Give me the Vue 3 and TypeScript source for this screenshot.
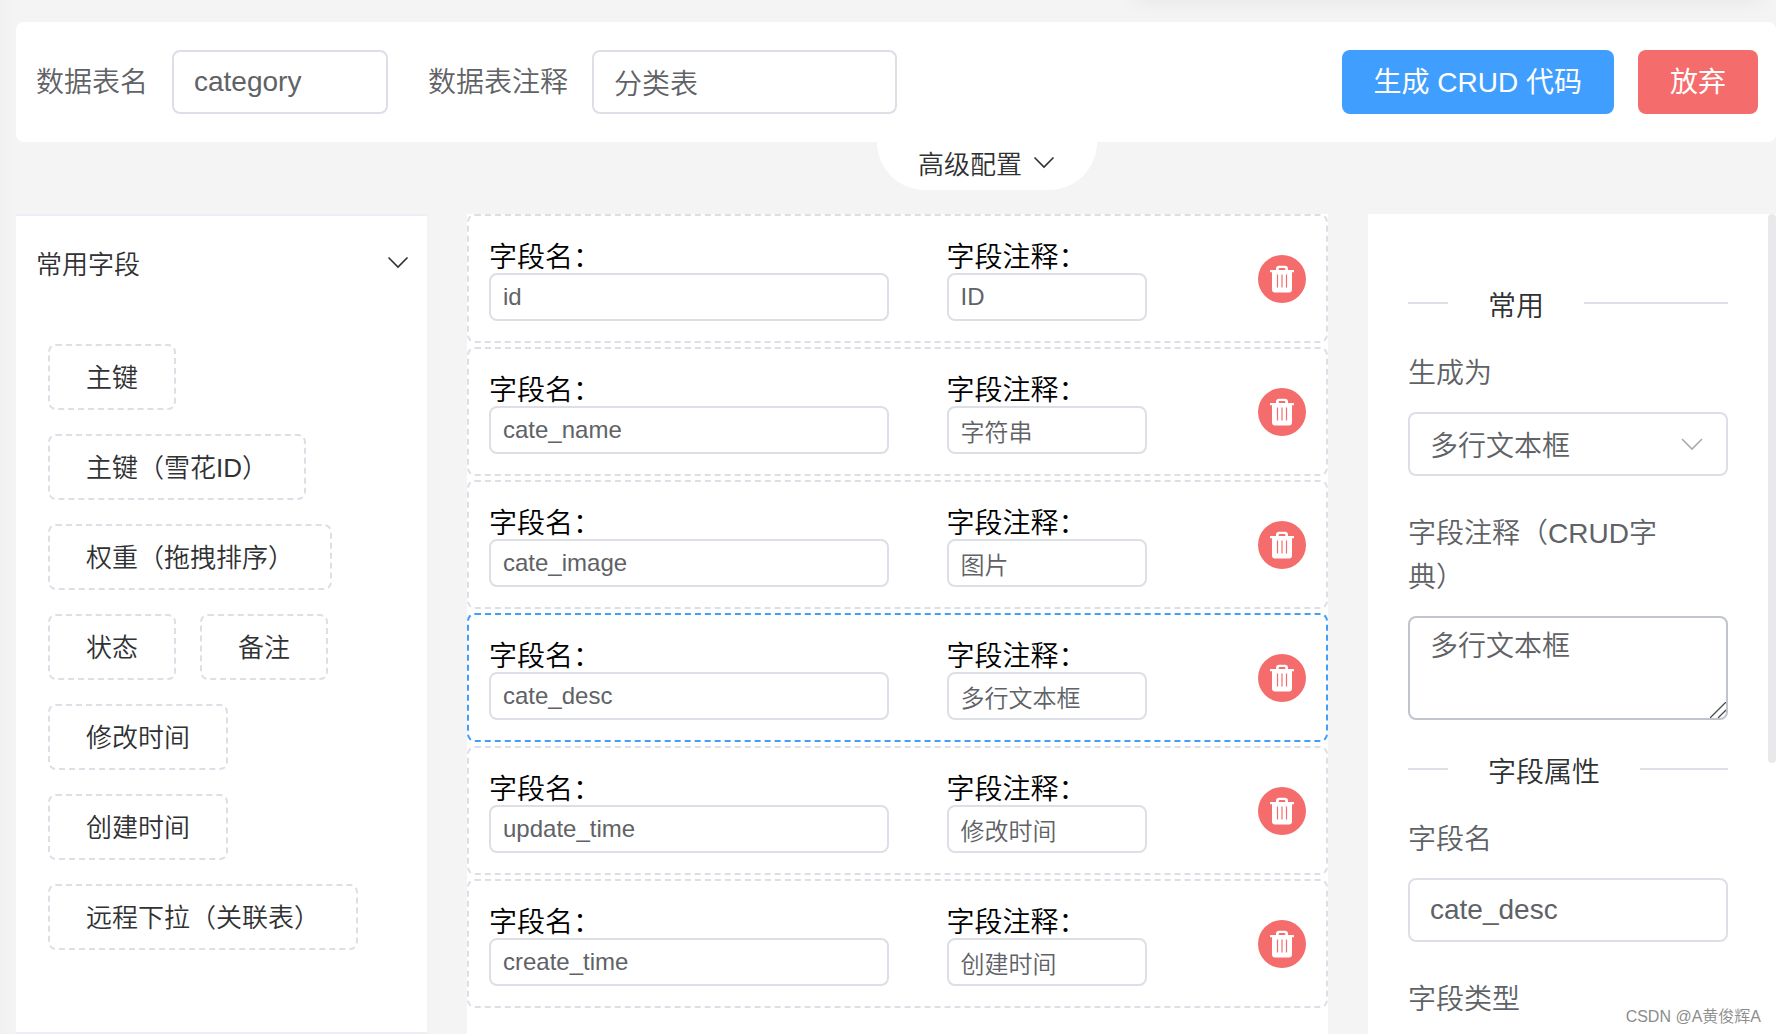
<script setup lang="ts">
import { ref } from 'vue'

interface FieldRow {
  name: string
  comment: string
}

const tableName = ref('category')
const tableComment = ref('分类表')

const commonFields: string[] = [
  '主键',
  '主键（雪花ID）',
  '权重（拖拽排序）',
  '状态',
  '备注',
  '修改时间',
  '创建时间',
  '远程下拉（关联表）',
]

const fields = ref<FieldRow[]>([
  { name: 'id', comment: 'ID' },
  { name: 'cate_name', comment: '字符串' },
  { name: 'cate_image', comment: '图片' },
  { name: 'cate_desc', comment: '多行文本框' },
  { name: 'update_time', comment: '修改时间' },
  { name: 'create_time', comment: '创建时间' },
])

const activeIndex = ref(3)
const designType = ref('多行文本框')
const dictComment = ref('多行文本框')
const attrName = ref('cate_desc')

function removeField(index: number) {
  fields.value.splice(index, 1)
}
</script>

<template>
  <div class="page">
    <div class="top-shadow" aria-hidden="true"></div>

    <header class="toolbar">
      <label class="form-label" for="table-name">数据表名</label>
      <input id="table-name" v-model="tableName" class="input table-name" type="text" />
      <label class="form-label next" for="table-comment">数据表注释</label>
      <input id="table-comment" v-model="tableComment" class="input table-comment" type="text" />
      <div class="actions">
        <button class="btn primary" type="button">生成 CRUD 代码</button>
        <button class="btn danger" type="button">放弃</button>
      </div>
    </header>

    <button class="advanced" type="button">
      <span>高级配置</span>
      <svg class="chevron" viewBox="0 0 24 24" aria-hidden="true"><path d="M2.5 7.5 12 17l9.500-9.500" /></svg>
    </button>

    <main class="workspace">
      <section class="panel common">
        <button class="collapse-head" type="button">
          <span>常用字段</span>
          <svg class="chevron" viewBox="0 0 24 24" aria-hidden="true"><path d="M2.5 7.5 12 17l9.500-9.500" /></svg>
        </button>
        <ul class="chips">
          <li v-for="item in commonFields" :key="item" class="chip">{{ item }}</li>
        </ul>
      </section>

      <section class="panel designer">
        <div
          v-for="(field, index) in fields"
          :key="index"
          class="row"
          :class="{ active: index === activeIndex }"
          @click="activeIndex = index"
        >
          <div class="cell name-cell">
            <label :for="'name-' + index">字段名：</label>
            <input :id="'name-' + index" v-model="field.name" class="input small" type="text" />
          </div>
          <div class="cell comment-cell">
            <label :for="'comment-' + index">字段注释：</label>
            <input :id="'comment-' + index" v-model="field.comment" class="input small" type="text" />
          </div>
          <button class="delete" type="button" aria-label="删除" @click.stop="removeField(index)">
            <svg viewBox="0 0 24 28" aria-hidden="true">
              <path
                fill-rule="evenodd"
                d="M6 5V3.500C6 1.800 7.300.8 9 .8h6c1.700 0 3 1 3 2.700V5h5.500c.4 0 .5.200.5.500v1.200c0 .4-.1.600-.5.600H22v17.200c0 1.800-1.100 3-2.800 3H4.800C3.100 27.500 2 26.300 2 24.500V7.300H.5C.1 7.300 0 7.100 0 6.700V5.500C0 5.200.1 5 .5 5zm2.500 0h7l-.5-1.500c-.1-.3-.3-.4-.6-.4H9.600c-.3 0-.5.100-.6.400zM6.900 9.500v13h1.200v-13zm4.500 0v13h1.200v-13zm4.500 0v13h1.200v-13z"
              />
            </svg>
          </button>
        </div>
      </section>

      <aside class="panel config">
        <div class="config-body">
          <div class="divider"><span>常用</span></div>
          <div class="form-item">
            <label class="form-label" for="design-type">生成为</label>
            <div class="select-wrap">
              <select id="design-type" v-model="designType" class="input">
                <option>多行文本框</option>
                <option>字符串</option>
                <option>图片</option>
              </select>
              <svg class="chevron" viewBox="0 0 24 24" aria-hidden="true"><path d="M2 7 12 17 22 7" /></svg>
            </div>
          </div>
          <div class="form-item">
            <label class="form-label" for="dict-comment">字段注释（CRUD字典）</label>
            <div class="textarea-wrap">
              <textarea id="dict-comment" v-model="dictComment" class="input"></textarea>
              <svg class="grip" viewBox="0 0 16 16" aria-hidden="true"><path d="M0 16 16 0M8 16l8-8" /></svg>
            </div>
          </div>
          <div class="divider"><span>字段属性</span></div>
          <div class="form-item">
            <label class="form-label" for="attr-name">字段名</label>
            <input id="attr-name" v-model="attrName" class="input" type="text" />
          </div>
          <div class="form-item">
            <span class="form-label">字段类型</span>
          </div>
        </div>
        <div class="scroll-track" aria-hidden="true"><div class="scroll-thumb"></div></div>
      </aside>
    </main>

    <div class="watermark">CSDN @A黄俊辉A</div>
  </div>
</template>

<style>
body {
  margin: 0;
  background: #f4f4f4;
}
</style>

<style scoped>
* {
  box-sizing: border-box;
}

.page {
  position: relative;
  display: flex;
  flex-direction: column;
  height: 100vh;
  padding: 22px 0 0 16px;
  overflow: hidden;
  background: linear-gradient(to right, #f1f1f1, #f4f4f4 16px);
  color: #303133;
  font-family: 'Liberation Sans', 'Noto Sans CJK SC', sans-serif;
  font-size: 28px;
  font-weight: 350;
}

button,
input,
select,
textarea {
  margin: 0;
  font: inherit;
}

button {
  border: 0;
  cursor: pointer;
}

.top-shadow {
  position: absolute;
  top: -20px;
  right: 16px;
  width: 624px;
  height: 16px;
  box-shadow: 0 0 24px rgba(0, 0, 0, 0.1);
}

.toolbar {
  position: relative;
  display: flex;
  flex: none;
  align-items: center;
  height: 120px;
  padding: 0 18px 0 20px;
  border-radius: 8px;
  background: #fff;
}

.form-label {
  padding-top: 2px;
  color: #606266;
  line-height: 42px;
  white-space: nowrap;
}

.form-label.next {
  margin-left: 40px;
}

.input {
  display: block;
  width: 100%;
  height: 64px;
  padding: 0 20px;
  border: 2px solid #dcdfe6;
  border-radius: 8px;
  outline: 0;
  background: #fff;
  color: #606266;
  appearance: none;
}

.table-name {
  width: 216px;
  margin-left: 24px;
}

.table-comment {
  width: 305px;
  margin-left: 24px;
}

.actions {
  display: flex;
  gap: 24px;
  margin-left: auto;
}

.btn {
  height: 64px;
  padding: 0 32px 4px;
  border-radius: 8px;
  color: #fff;
  font-weight: 400;
  white-space: nowrap;
}

.primary {
  background: #409eff;
}

.danger {
  background: #f56c6c;
}

.chevron {
  flex: none;
  width: 24px;
  height: 24px;
  fill: none;
  stroke: currentColor;
  stroke-width: 1.6;
}

.advanced {
  display: flex;
  flex: none;
  align-items: center;
  justify-content: center;
  gap: 10px;
  width: 220px;
  height: 48px;
  margin-left: calc(50% - 19px);
  padding: 0 0 8px;
  border-radius: 0 0 48px 48px;
  background: #fff;
  color: #303133;
  font-size: 26px;
}

.workspace {
  display: grid;
  flex: 1;
  grid-template-columns: 411fr 861fr 408fr;
  gap: 40px;
  min-height: 0;
  margin-top: 24px;
}

.panel {
  min-width: 0;
  background: #fff;
}

.common {
  border-top: 2px solid #ebeef5;
  border-bottom: 2px solid #ebeef5;
}

.collapse-head {
  display: flex;
  align-items: center;
  justify-content: space-between;
  width: 100%;
  height: 96px;
  padding: 0 17px 4px 20px;
  background: none;
  color: #303133;
  font-size: 26px;
}

.chips {
  display: flex;
  flex-wrap: wrap;
  gap: 24px;
  margin: 0;
  padding: 32px 16px 32px 32px;
  list-style: none;
}

.chip {
  height: 66px;
  padding: 0 36px;
  border: 2px dashed #dcdfe6;
  border-radius: 8px;
  font-size: 26px;
  line-height: 64px;
  white-space: nowrap;
}

.row {
  display: flex;
  align-items: center;
  margin-bottom: 4px;
  padding: 20px;
  border: 2px dashed #dcdfe6;
  border-radius: 8px;
}

.row.active {
  border-color: #409eff;
}

.cell label {
  display: block;
  padding-top: 7px;
  color: #000;
  line-height: 30px;
  white-space: nowrap;
}

.name-cell {
  width: 49%;
}

.comment-cell {
  width: 200px;
  margin-left: 7%;
}

.input.small {
  height: 48px;
  padding: 0 12px;
  font-size: 24px;
}

.delete {
  display: flex;
  flex: none;
  align-items: center;
  justify-content: center;
  width: 48px;
  height: 48px;
  margin-left: auto;
  padding: 0;
  border-radius: 50%;
  background: #f56c6c;
}

.delete svg {
  width: 24px;
  height: 28px;
  fill: #fff;
}

.config {
  display: flex;
  overflow: hidden;
}

.config-body {
  flex: 1;
  min-width: 0;
  padding: 40px 40px 0;
}

.divider {
  display: flex;
  align-items: center;
  gap: 40px;
  height: 2px;
  margin: 48px 0;
  line-height: 44px;
  white-space: nowrap;
}

.divider span {
  padding-top: 8px;
}

.divider::before,
.divider::after {
  width: 40px;
  height: 2px;
  background: #dcdfe6;
  content: '';
}

.divider::after {
  flex: 1;
}

.form-item {
  margin-bottom: 36px;
}

.form-item .form-label {
  display: block;
  padding-top: 0;
  padding-right: 48px;
  margin-bottom: 16px;
  line-height: 44px;
  white-space: normal;
}

.select-wrap,
.textarea-wrap {
  position: relative;
}

.select-wrap .input {
  padding-top: 4px;
}

.select-wrap .chevron {
  position: absolute;
  top: 20px;
  right: 24px;
  color: #a8abb2;
  pointer-events: none;
}

textarea.input {
  height: 104px;
  padding: 8px 20px;
  border-color: #c0c4cc;
  line-height: 42px;
  resize: none;
}

.grip {
  position: absolute;
  right: 2px;
  bottom: 2px;
  width: 16px;
  height: 16px;
  fill: none;
  stroke: #4a4a4a;
  stroke-width: 1.3;
  pointer-events: none;
}

.scroll-track {
  flex: none;
  width: 8px;
}

.scroll-thumb {
  height: 67%;
  border-radius: 8px;
  background: #e9e9eb;
}

.watermark {
  position: absolute;
  right: 15px;
  bottom: 5px;
  color: #8c8c8c;
  font-size: 16px;
  line-height: 24px;
}
</style>
